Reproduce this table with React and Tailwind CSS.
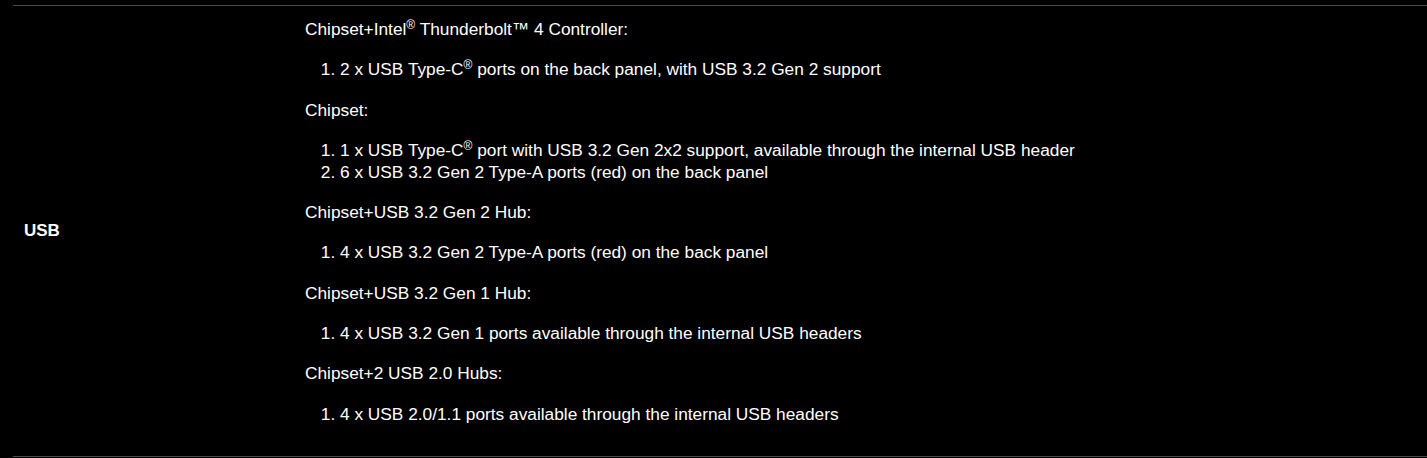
import React from "react";

const groups = [
  {
    title: (
      <>
        Chipset+Intel<sup className="text-[12px]">®</sup> Thunderbolt™ 4 Controller:
      </>
    ),
    items: [
      <>
        2 x USB Type-C<sup className="text-[12px]">®</sup> ports on the back panel, with USB 3.2 Gen 2 support
      </>,
    ],
  },
  {
    title: "Chipset:",
    items: [
      <>
        1 x USB Type-C<sup className="text-[12px]">®</sup> port with USB 3.2 Gen 2x2 support, available through the internal USB header
      </>,
      "6 x USB 3.2 Gen 2 Type-A ports (red) on the back panel",
    ],
  },
  {
    title: "Chipset+USB 3.2 Gen 2 Hub:",
    items: ["4 x USB 3.2 Gen 2 Type-A ports (red) on the back panel"],
  },
  {
    title: "Chipset+USB 3.2 Gen 1 Hub:",
    items: ["4 x USB 3.2 Gen 1 ports available through the internal USB headers"],
  },
  {
    title: "Chipset+2 USB 2.0 Hubs:",
    items: ["4 x USB 2.0/1.1 ports available through the internal USB headers"],
  },
];

export default function App() {
  return (
    <div
      className="min-h-[458px] bg-black pt-[5px] pl-[13px] text-white"
      style={{ fontFamily: '"Liberation Sans", Arial, sans-serif' }}
    >
      <div className="flex border-y border-[#4a4a4a] text-[17.3px]">
        <div className="flex w-[292px] shrink-0 items-center pl-[11px] text-[17px] font-bold">
          USB
        </div>
        <div className="flex flex-col gap-[18.3px] pt-[12px] pb-[31px] leading-[22px]">
          {groups.map((g, i) => (
            <React.Fragment key={i}>
              <p>{g.title}</p>
              <ol className="list-decimal pl-[35px]">
                {g.items.map((it, j) => (
                  <li key={j}>{it}</li>
                ))}
              </ol>
            </React.Fragment>
          ))}
        </div>
      </div>
    </div>
  );
}
